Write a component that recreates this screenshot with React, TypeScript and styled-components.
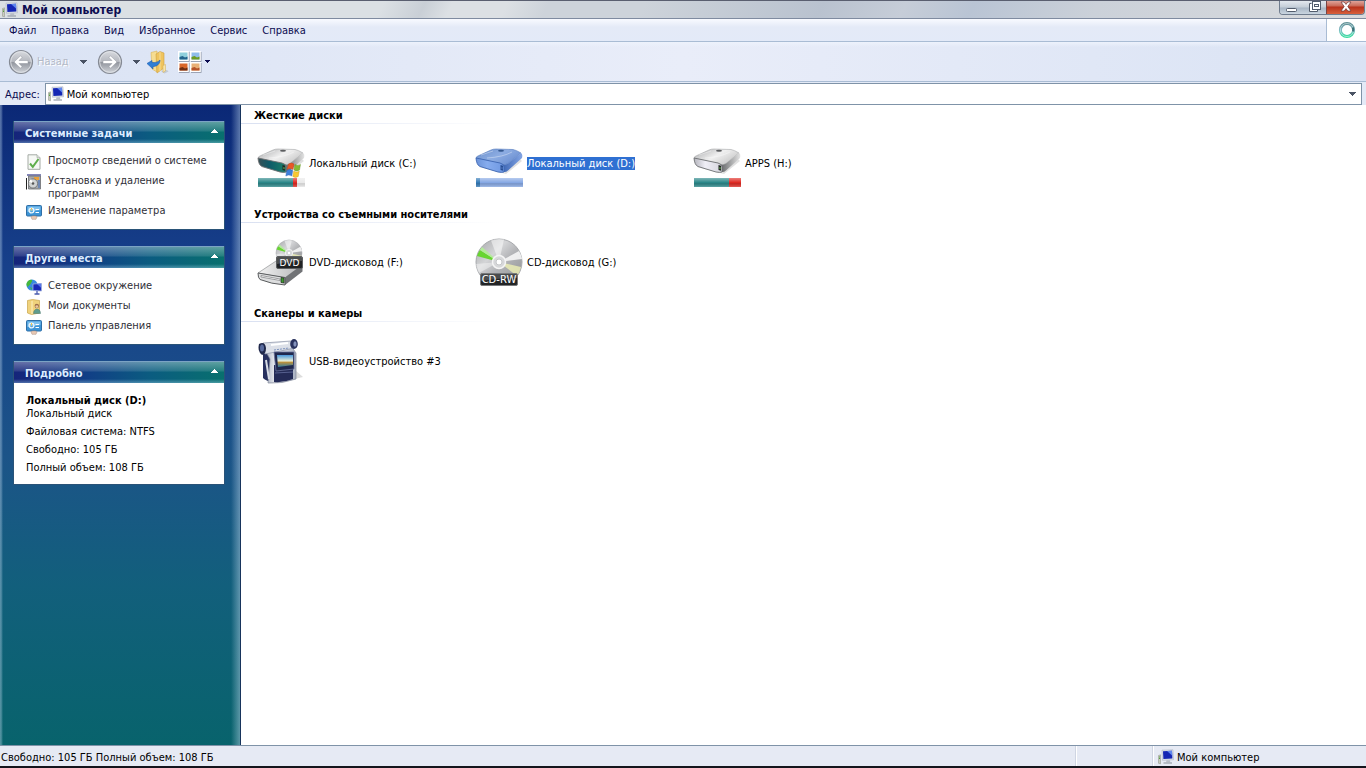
import React from "react";
import styled, { createGlobalStyle, css } from "styled-components";

const GlobalStyle = createGlobalStyle`
  * { box-sizing: border-box; }
  body {
    margin: 0;
    background: #fff;
    color: #000;
    font: 11px/13px Tahoma, "DejaVu Sans Condensed", "DejaVu Sans", sans-serif;
  }
  button, input { font: inherit; color: inherit; }
  svg { display: block; flex: none; }
`;

const Window = styled.div`
  display: flex;
  flex-direction: column;
  min-height: 100vh;
  background: #e4eaf6;
`;

const TitleBar = styled.header`
  display: flex;
  align-items: center;
  height: 19px;
  padding-left: 2px;
  gap: 4px;
  border-top: 1px solid #5a5f70;
  border-bottom: 1px solid #7f8ba0;
  background: linear-gradient(115deg, #dbe0e4 0 28%, #c9cfd6 31%, #dce0e4 33% 37%, #cdd3da 40% 47%, #b9c2cf 60%, #c6cdd8 66%, #b9c4d4 71%, #cbd1d9 80%, #d8dadd 100%);
`;

const Title = styled.h1`
  flex: 1;
  margin: 0;
  color: #0c0c50;
  font: bold 12px/16px Tahoma, "DejaVu Sans Condensed", "DejaVu Sans", sans-serif;
`;

const WindowButtons = styled.div`
  display: flex;
  align-self: flex-start;
  height: 14px;
  margin-right: 1px;
  border: 1px solid #6f7c8e;
  border-top: 0;
  border-radius: 0 0 4px 4px;
  overflow: hidden;
`;

const WindowButton = styled.button<{ $close?: boolean }>`
  display: flex;
  justify-content: center;
  width: ${(p) => (p.$close ? 38 : 23)}px;
  padding: 0;
  border: 0;
  background: ${(p) =>
    p.$close
      ? "linear-gradient(#dfa399 0, #c96a58 5px, #b8321c 6px, #d8603c 13px)"
      : "linear-gradient(#e3e8ee 0, #c5ced8 6px, #a9b6c5 7px, #cad5e0 13px)"};
  ${(p) => p.$close && css`border-left: 1px solid #7a4444;`}
`;

const MenuBar = styled.nav`
  display: flex;
  height: 23px;
  border-bottom: 1px solid #a9bcd4;
  background: linear-gradient(#f8faff, #e4eaf7 8px, #e3eaf8);
`;

const MenuList = styled.ul`
  display: flex;
  flex: 1;
  align-items: center;
  gap: 15px;
  margin: 0;
  padding: 0 0 0 9px;
  list-style: none;
`;

const MenuItem = styled.button`
  padding: 0;
  border: 0;
  background: none;
  color: #0c0c50;
`;

const Throbber = styled.div`
  display: flex;
  align-items: center;
  justify-content: center;
  width: 40px;
  border-left: 1px solid #a9bcd4;
  background: #fff;
`;

const Toolbar = styled.div`
  display: flex;
  align-items: center;
  height: 40px;
  padding-left: 8px;
  border-bottom: 1px solid #a9bcd4;
  background: linear-gradient(#edf2fc, transparent 5px), linear-gradient(90deg, #dae3f4, #e9edf9 50%, #dae3f4);
`;

const ToolButton = styled.button<{ $gap: number }>`
  display: flex;
  align-items: center;
  gap: 3px;
  margin-right: ${(p) => p.$gap}px;
  padding: 0;
  border: 0;
  background: none;
  color: #b4b9c6;
  text-shadow: 1px 1px #fff;
`;

const AddressBar = styled.form`
  display: flex;
  align-items: center;
  height: 23px;
  padding: 1px 4px 0 5px;
  gap: 5px;
  background: #e4eaf7;
  color: #0c0c50;
`;

const AddressBox = styled.div`
  display: flex;
  flex: 1;
  align-items: center;
  height: 22px;
  padding: 0 2px;
  gap: 3px;
  border: 1px solid #7f93a8;
  background: #fff;
  color: #000;
`;

const AddressInput = styled.input`
  flex: 1;
  padding: 0;
  border: 0;
  outline: 0;
  background: transparent;
`;

const DropButton = styled.button`
  padding: 0 3px;
  border: 0;
  background: none;
`;

const Body = styled.div`
  display: flex;
  flex: 1;
`;

const Sidebar = styled.aside`
  width: 241px;
  flex: none;
  padding: 16px 15px 16px 13px;
  border-right: 1px solid #17345c;
  background:
    linear-gradient(90deg, rgba(190, 215, 235, 0.4) 0 1px, transparent 3px calc(100% - 9px), rgba(190, 215, 235, 0.45)),
    linear-gradient(#0b2876, #17408a 25%, #1c5488 55%, #125f7c 75%, #08636c);
`;

const Panel = styled.section`
  margin-bottom: 16px;
  border: 1px solid #2a5378;
  border-top: 0;
  background: #fff;
`;

const PanelHeader = styled.h2`
  display: flex;
  align-items: center;
  justify-content: space-between;
  height: 22px;
  margin: 0;
  padding: 1px 6px 0 11px;
  border-top: 1px solid #7ba3c4;
  background:
    linear-gradient(rgba(255, 255, 255, 0.35), rgba(255, 255, 255, 0.12) 9px, transparent 10px 17px, rgba(170, 220, 240, 0.4)),
    linear-gradient(90deg, #15247a, #113f86 35%, #0b5c80 65%, #08706e);
  color: #dcecff;
  font: bold 11px/13px Tahoma, "DejaVu Sans Condensed", "DejaVu Sans", sans-serif;
`;

const CollapseButton = styled.button`
  padding: 0 0 4px;
  border: 0;
  background: none;
`;

const TaskList = styled.ul`
  display: grid;
  gap: 4px;
  margin: 0;
  padding: 11px 8px 9px 12px;
  list-style: none;
`;

const TaskLink = styled.a`
  display: flex;
  gap: 6px;
  color: #303038;
  text-decoration: none;
`;

const Details = styled.div`
  padding: 11px 12px 10px;
  p { margin: 0 0 5px; }
  p:last-child { margin: 0; }
  strong { display: block; }
`;

const Content = styled.main`
  flex: 1;
  min-width: 0;
  background: #fff;
`;

const GroupTitle = styled.h2`
  height: 19px;
  margin: 0;
  padding: 4px 0 0 13px;
  border-bottom: 1px solid;
  border-image: linear-gradient(90deg, #d9e0f1, #fff 260px) 1;
  font: bold 11px/13px Tahoma, "DejaVu Sans Condensed", "DejaVu Sans", sans-serif;
`;

const Tiles = styled.div`
  display: flex;
  flex-wrap: wrap;
  padding: 15px 16px 17px;
`;

const Tile = styled.button`
  display: flex;
  align-items: center;
  width: 218px;
  padding: 0;
  gap: 4px;
  border: 0;
  background: none;
  text-align: left;
  white-space: nowrap;
`;

const TileLabel = styled.span<{ $selected?: boolean }>`
  ${(p) => p.$selected && css`background: #2f70d2; color: #fff;`}
`;

const StatusBar = styled.footer`
  display: flex;
  height: 23px;
  border-top: 1px solid #7f93a8;
  border-bottom: 2px solid #14141c;
  background: #e6eaf4;
`;

const StatusCell = styled.div<{ $width?: number }>`
  display: flex;
  align-items: center;
  gap: 3px;
  padding: 2px 0 0 1px;
  ${(p) =>
    p.$width
      ? css`width: ${p.$width}px; padding-left: 5px; border-left: 1px solid #cfd5e2; box-shadow: inset 1px 0 #fff;`
      : css`flex: 1;`}
`;

const Arrow = ({ color = "#4a5364", up = false }: { color?: string; up?: boolean }) => (
  <svg width="7" height="4" viewBox="0 0 7 4" shapeRendering="crispEdges" aria-hidden="true">
    <path d={up ? "M0 4L3.5 0L7 4Z" : "M0 0H7L3.5 4Z"} fill={color} />
  </svg>
);

const SmallArrow = () => (
  <svg width="5" height="3" viewBox="0 0 5 3" shapeRendering="crispEdges" aria-hidden="true">
    <path d="M0 0H5L2.5 3Z" fill="#0c0c50" />
  </svg>
);

const ComputerIcon = () => (
  <svg width="16" height="16" viewBox="0 0 16 16" aria-hidden="true">
    <path d="M.5 6.500l2-.7v9l-2-.5z" fill="#c9ccbf" stroke="#8a8e84" strokeWidth=".5" />
    <path d="M1 8h1M1 9.500h1" stroke="#57a040" />
    <path d="M4 1.200l11-.4.5 10-11 .5z" fill="#dfe3ea" stroke="#a2abba" strokeWidth=".5" />
    <path d="M5 2.200l9-.4.4 7.800-9 .4z" fill="#1526b4" />
    <path d="M9 2l5-.2.3 5z" fill="#5f86ee" />
    <path d="M8.500 11.200h3.500l.3 2H8z" fill="#b9bec8" />
    <path d="M5.500 14h8.500" stroke="#989ea8" strokeWidth="1.200" />
  </svg>
);

const NavIcon = ({ forward = false }: { forward?: boolean }) => (
  <svg width="26" height="26" viewBox="0 0 26 26" aria-hidden="true">
    <defs>
      <linearGradient id="nav" x2="0" y2="1">
        <stop stopColor="#d9dbe0" /><stop offset=".48" stopColor="#b5b8bf" />
        <stop offset=".52" stopColor="#92969e" /><stop offset="1" stopColor="#d3d6db" />
      </linearGradient>
    </defs>
    <circle cx="13" cy="13" r="11.500" fill="url(#nav)" stroke="#858a94" strokeWidth="1.200" />
    <circle cx="13" cy="13" r="10.300" fill="none" stroke="#e2e4e8" strokeWidth=".8" />
    <path
      d="M6 13L12.500 6.800L14 8.500L11 11.500H20V14.500H11L14 17.500L12.500 19.200Z"
      fill="#fff" stroke="#92969e" strokeWidth=".5"
      transform={forward ? "translate(26 0) scale(-1 1)" : undefined}
    />
  </svg>
);

const UpFolderIcon = () => (
  <svg width="24" height="24" viewBox="0 0 24 24" aria-hidden="true">
    <path d="M15 21l6-1 1.500 1.500-4 2z" fill="#c3cad4" />
    <path d="M5 2.500L11 1v21l-5-3z" fill="#f6dd92" stroke="#d9b35a" strokeWidth=".6" />
    <path d="M10 4l4-2.500 4 1.500v15l-7 5z" fill="#efc45e" stroke="#cf9f3d" strokeWidth=".6" />
    <path d="M14 2v19" stroke="#f8dc94" />
    <path d="M17 15.500l2.500-1V21l-2.500 1.500z" fill="#f8e5a8" stroke="#cfaa58" strokeWidth=".5" />
    <path d="M1 13.500L6 10.500V12.500c4 .3 6-.5 8-2.500 0 4-3 6.500-7 6.500V19z" fill="#2f7fd6" stroke="#1c5cae" strokeWidth=".6" />
  </svg>
);

const ViewsIcon = () => (
  <svg width="24" height="22" viewBox="0 0 24 22" aria-hidden="true">
    {[[0, 0, "#8fd0dc", "#23648c"], [12, 0, "#8fbdea", "#6c9c22"], [0, 11, "#d9672a", "#702f12"], [12, 11, "#e9b077", "#b5532a"]].map(
      ([x, y, a, b], i) => (
        <g key={i} transform={`translate(${x} ${y})`}>
          <rect x="1" y="1" width="10.500" height="9.800" fill="#8d95a5" />
          <rect width="10.800" height="10" fill="#fff" />
          <rect x="1.500" y="1.500" width="8" height="7" fill={a as string} />
          <path d="M1.500 8.500V6l3-1L7 6.500l2.500-1v3z" fill={b as string} />
        </g>
      )
    )}
  </svg>
);

const ThrobberIcon = () => (
  <svg width="18" height="18" viewBox="0 0 18 18" aria-hidden="true">
    <defs>
      <linearGradient id="ring" x2="0" y2="1">
        <stop stopColor="#5d8f94" /><stop offset=".5" stopColor="#7fb9c4" /><stop offset="1" stopColor="#37dca0" />
      </linearGradient>
    </defs>
    <circle cx="9" cy="9" r="6.600" fill="none" stroke="url(#ring)" strokeWidth="3" />
    <circle cx="9" cy="9" r="6.600" fill="none" stroke="#fff" strokeOpacity=".45" strokeWidth="1" />
    <path d="M14.800 6.500a6 6 0 01.3 4" fill="none" stroke="#3e7076" strokeWidth="2.200" />
  </svg>
);

const CheckPageIcon = () => (
  <svg width="16" height="16" viewBox="0 0 16 16" aria-hidden="true">
    <path d="M2 .8h9l3 3v11.500H2z" fill="#f6f8f5" stroke="#a4aaa4" />
    <path d="M11 .8v3h3" fill="#dfe3df" stroke="#a4aaa4" strokeWidth=".7" />
    <path d="M4 9.500l2.800 3.300L12.500 5" fill="none" stroke="#5fae4c" strokeWidth="2" />
  </svg>
);

const InstallIcon = () => (
  <svg width="16" height="16" viewBox="0 0 16 16" aria-hidden="true">
    <path d="M1 0h14v2H1z" fill="#8487b8" />
    <path d="M2.500 2h12v13h-12z" fill="#a6a8ab" stroke="#6a6c70" strokeWidth=".8" />
    <path d="M8 3h5v3H8z" fill="#e8a13c" />
    <path d="M12 6h2v8h-2z" fill="#6f88b4" />
    <path d="M.5 4v11.500" fill="none" stroke="#222" />
    <circle cx="7" cy="9.500" r="4.600" fill="#d2d4d5" stroke="#66686b" strokeWidth=".8" />
    <path d="M7 9.500L3 7.500l2-2.500z" fill="#fff" />
    <circle cx="7" cy="9.500" r="1.300" fill="#555" />
  </svg>
);

const ControlPanelIcon = () => (
  <svg width="16" height="16" viewBox="0 0 16 16" aria-hidden="true">
    <rect x=".5" y="1.500" width="15" height="10.500" rx="1" fill="#3d94d6" stroke="#2f6ea6" />
    <path d="M1.500 2.500h13v3.500l-13 2z" fill="#7cc0ee" />
    <circle cx="5.500" cy="6.500" r="2.400" fill="none" stroke="#e9f5fd" strokeWidth="1.300" />
    <path d="M5.500 6.500V4" stroke="#f3c44b" />
    <path d="M9.500 5.500H13M9.500 8.500H13" stroke="#fff" strokeWidth="1.200" />
    <path d="M5 13c0-1.500 6-1.500 6 0l-1 2.300H6z" fill="#e8c9b4" stroke="#a88d80" strokeWidth=".5" />
  </svg>
);

const NetworkIcon = () => (
  <svg width="16" height="16" viewBox="0 0 16 16" aria-hidden="true">
    <circle cx="6" cy="6" r="5.500" fill="#3a8be0" />
    <path d="M2 2c3-2.500 5-1 4 .5S5 5 3 6.500 2 9 1 7 .5 4 2 2zM4 8l2 1-.5 2.500z" fill="#46b83a" />
    <path d="M7 5l8.500-.5v7.500L7 11.500z" fill="#1a2ab8" stroke="#9fb0dc" strokeWidth=".8" />
    <path d="M11 5l4-.2v4z" fill="#5675ea" />
    <path d="M11 12v3M8.500 15h5" stroke="#4a5cae" strokeWidth="1.300" />
  </svg>
);

const DocumentsIcon = () => (
  <svg width="16" height="16" viewBox="0 0 16 16" aria-hidden="true">
    <path d="M1.500 1.500l5-1 7 1V14l-8 1.500-4-1.500z" fill="#f0d27c" stroke="#c9a548" strokeWidth=".7" />
    <path d="M6 2v13" stroke="#fdf1c2" />
    <circle cx="10.800" cy="7" r="2.200" fill="#9b6e48" />
    <circle cx="10.800" cy="7.600" r="1.400" fill="#eac69f" />
    <path d="M7.500 14.500c0-6 7-6 7 0z" fill="#5f9c8e" stroke="#4d7a70" strokeWidth=".5" />
  </svg>
);

type DriveKind = "system" | "selected" | "plain";

const DriveIcon = ({ kind, used, critical = 0 }: { kind: DriveKind; used: number; critical?: number }) => {
  const blue = kind === "selected";
  const id = `drive-${kind}`;
  return (
    <svg width="48" height="48" viewBox="0 0 48 48" aria-hidden="true">
      <defs>
        <linearGradient id={`${id}-top`} x2="1" y2=".6">
          <stop stopColor={blue ? "#6c90cc" : "#a6a7a9"} />
          <stop offset=".55" stopColor={blue ? "#8cace2" : "#f0f0f0"} />
          <stop offset="1" stopColor={blue ? "#6c90d2" : "#c8c8c8"} />
        </linearGradient>
        <linearGradient id={`${id}-side`} x2="1">
          <stop stopColor={blue ? "#3f68b5" : "#66686a"} />
          <stop offset="1" stopColor={blue ? "#83a5e4" : "#e4e4e4"} />
        </linearGradient>
        <linearGradient id={`${id}-face`} x2="1">
          <stop stopColor={blue ? "#6a92d8" : kind === "system" ? "#3a5055" : "#b4b4bc"} />
          <stop offset=".4" stopColor={blue ? "#86acee" : kind === "system" ? "#0f5a68" : "#efeef6"} />
          <stop offset="1" stopColor={blue ? "#6f98e2" : kind === "system" ? "#1a8068" : "#d5d5dc"} />
        </linearGradient>
        <linearGradient id={`${id}-bar`} x2="0" y2="1">
          <stop stopColor="#fff" stopOpacity=".4" />
          <stop offset=".5" stopColor="#fff" stopOpacity="0" />
          <stop offset=".55" stopOpacity=".1" />
          <stop offset="1" stopColor="#fff" stopOpacity=".25" />
        </linearGradient>
      </defs>
      <path d="M4 28L31 35L47 22L44 19L28 29Z" fill="#000" opacity=".12" />
      <path d="M1 19Q1 17.500 4 16.500L16 11Q18 10 21 10L38 10.500Q41 11 46 14L33 24.500Q31 26 27 25.500Z" fill={`url(#${id}-top)`} stroke={blue ? "#5278bc" : "#a5a6a8"} strokeWidth=".6" />
      <path d="M28 25.500Q31 26 33 24.500L46 14Q48 15 47 19L33 31.500Q31 33.500 28.500 33Z" fill={`url(#${id}-side)`} />
      <path d="M1 19L25 24Q29 25 29 28V33Q27 33.800 23 33L5 27.500Q1.500 26 1 19Z" fill={`url(#${id}-face)`} stroke={blue ? "#3d66b2" : "#6c6e71"} strokeWidth=".9" />
      <path d="M6 16L18 12M12 19Q28 18 37 13" stroke="#fff" strokeOpacity=".35" fill="none" />
      <ellipse cx="26" cy="11.800" rx="3" ry="1" fill={blue ? "#34588f" : "#5c5e60"} />
      <path d="M25.500 26l2.500.7v5l-2.500-.6z" fill={blue ? "#284f94" : "#202623"} />
      <path d="M26.500 28l1 .2v2l-1-.2z" fill={blue ? "#5379be" : "#6fbb59"} />
      {kind === "system" && (
        <g strokeWidth=".4">
          <path d="M31.500 25q3-2 5.500 0l-1 5.500q-3-2-6 0z" fill="#ea5725" stroke="#b9421c" />
          <path d="M38 25.500q3 2 5.500 0l-1 5.500q-3 2-5.500 0z" fill="#85bb32" stroke="#5d8e1f" />
          <path d="M29.800 31.500q3-2 6 0l-1 5.500q-3-2-6 0z" fill="#3c7fdc" stroke="#2b5eac" />
          <path d="M36.800 32q3 2 5.500 0l-1 5.500q-3 2-5.500 0z" fill="#f8c830" stroke="#c89a1e" />
        </g>
      )}
      <rect x="1" y="39" width="47" height="9" fill={blue ? "#86a8e4" : "#e9e9e9"} />
      <rect x="1" y="39" width={used} height="9" fill={blue ? "#357bb8" : "#2b8789"} />
      <rect x={1 + used} y="39" width={critical} height="9" fill="#df2a23" />
      <rect x="1" y="39" width="47" height="9" fill={`url(#${id}-bar)`} />
    </svg>
  );
};

const Disc = ({ id, cx, cy, r }: { id: string; cx: number; cy: number; r: number }) => (
  <g transform={`translate(${cx} ${cy}) scale(${r / 23})`}>
    <defs>
      <linearGradient id={id} x2="1" y2="1">
        <stop stopColor="#a2a4a6" /><stop offset=".35" stopColor="#d4d5d7" />
        <stop offset=".55" stopColor="#b4b5b8" /><stop offset="1" stopColor="#8d8f92" />
      </linearGradient>
    </defs>
    <circle r="23" fill={`url(#${id})`} stroke="#a8aaad" />
    <path d="M0 0L-8-21.500A23 23 0 015-22.500Z" fill="#fff" opacity=".5" />
    <path d="M0 0L20-11A23 23 0 0123-3Z" fill="#fff" opacity=".8" />
    <path d="M0 0L-19-12A23 23 0 00-22-6Z" fill="#68d531" />
    <path d="M0 0L-17-15A23 23 0 00-19-12Z" fill="#b4ec9a" />
    <path d="M0 0L22 5A23 23 0 0118 14Z" fill="#eef0b4" opacity=".8" />
    <path d="M0 0L-23 2A23 23 0 00-20 11Z" fill="#fff" opacity=".4" />
    <circle r="6.500" fill="#d7d8da" stroke="#f5f5f5" strokeWidth="1.500" />
    <circle r="3" fill="#fff" stroke="#c5c7c9" />
  </g>
);

const DvdIcon = () => (
  <svg width="48" height="48" viewBox="0 0 48 48" aria-hidden="true">
    <defs>
      <linearGradient id="dvd-top" x2="1"><stop stopColor="#f3f3f3" /><stop offset="1" stopColor="#b4b5b7" /></linearGradient>
    </defs>
    <Disc id="dvd-disc" cx={32} cy={15} r={13} />
    <path d="M1 35L19 23H43Q46 24 45 27L28 40Z" fill="url(#dvd-top)" stroke="#919395" strokeWidth=".7" />
    <path d="M28 39.500L45.500 26.500V33.500L28 47Z" fill="#717376" />
    <path d="M1 35L28 39.500V47Q14 46 3 41.500Q1 40 1 35Z" fill="#dddedf" stroke="#5a5c5e" />
    <path d="M4 37.500L23 41V42.500L4 39Z" fill="#fff" stroke="#88898b" strokeWidth=".8" />
    <path d="M24 39.500l3 .5v5l-3-.5z" fill="#3d9c2e" stroke="#222" strokeWidth=".7" />
    <rect x="19.500" y="18.500" width="26" height="12" rx="1.500" fill="#202224" stroke="#5c5e60" />
    <path d="M20 19h25v4q-12 0-25 3z" fill="#fff" opacity=".2" />
    <text x="32.500" y="28" fill="#fff" fontSize="9" fontFamily="DejaVu Sans, sans-serif" textAnchor="middle">DVD</text>
  </svg>
);

const CdIcon = () => (
  <svg width="48" height="48" viewBox="0 0 48 48" aria-hidden="true">
    <Disc id="cd-disc" cx={24} cy={24} r={23} />
    <rect x="5.500" y="35.500" width="37" height="12" rx="1.500" fill="#222426" stroke="#77797b" />
    <path d="M6 36h36v4q-17 0-36 3z" fill="#fff" opacity=".18" />
    <text x="24" y="45" fill="#fff" fontSize="10" fontFamily="DejaVu Sans, sans-serif" textAnchor="middle">CD-RW</text>
  </svg>
);

const CameraIcon = () => (
  <svg width="48" height="48" viewBox="0 0 48 48" aria-hidden="true">
    <defs>
      <linearGradient id="cam-body" x2="1"><stop stopColor="#aab1c2" /><stop offset=".35" stopColor="#f5f6f8" /><stop offset="1" stopColor="#a7afc0" /></linearGradient>
      <linearGradient id="cam-lcd" x2="0" y2="1"><stop stopColor="#4998dc" /><stop offset=".5" stopColor="#edf1d7" /><stop offset=".6" stopColor="#be9139" /><stop offset="1" stopColor="#2f7ca4" /></linearGradient>
    </defs>
    <path d="M20 46L46 40L38 33Z" fill="#777" opacity=".25" />
    <path d="M6 17L15 13L17 46Q9 44 6 41Z" fill="#27305e" />
    <path d="M9 15L34 9L39 16V42Q25 47 11 46L13 22Z" fill="url(#cam-body)" stroke="#818899" strokeWidth=".7" />
    <path d="M6 6L34 4L37 11Q25 14 8 17Z" fill="#dce0e8" stroke="#8b94a7" strokeWidth=".7" />
    <path d="M14 8L31 6" stroke="#fff" strokeWidth="2" />
    <path d="M17 13L32 11" stroke="#7e93bd" strokeDasharray="2 1" />
    <path d="M2 7Q8 4 9 11Q9 17 5 18Q0 14 2 7Z" fill="#20284b" />
    <ellipse cx="5" cy="11" rx="2" ry="3.500" fill="#596b9e" />
    <ellipse cx="37" cy="7" rx="3.800" ry="5" fill="#29325d" />
    <ellipse cx="38" cy="7" rx="1.600" ry="2.800" fill="#8492bb" />
    <path d="M17 28L36 29V42Q26 46 17 45Z" fill="#242b57" />
    <path d="M18 36L36 35" stroke="#56608f" />
    <path d="M17 15L37 15V32L19 34Z" fill="#20284d" stroke="#66709b" strokeWidth=".8" />
    <path d="M20 18L36 18V28L21 30Z" fill="url(#cam-lcd)" />
    <path d="M9 23L12 42" stroke="#d8dce5" strokeWidth="2" />
  </svg>
);

const menuItems = ["Файл", "Правка", "Вид", "Избранное", "Сервис", "Справка"];

type TaskEntry = { icon: React.ReactNode; label: string };

const systemTasks: TaskEntry[] = [
  { icon: <CheckPageIcon />, label: "Просмотр сведений о системе" },
  { icon: <InstallIcon />, label: "Установка и удаление программ" },
  { icon: <ControlPanelIcon />, label: "Изменение параметра" },
];

const otherPlaces: TaskEntry[] = [
  { icon: <NetworkIcon />, label: "Сетевое окружение" },
  { icon: <DocumentsIcon />, label: "Мои документы" },
  { icon: <ControlPanelIcon />, label: "Панель управления" },
];

const groups = [
  {
    title: "Жесткие диски",
    items: [
      { label: "Локальный диск (C:)", icon: <DriveIcon kind="system" used={35} critical={4} /> },
      { label: "Локальный диск (D:)", icon: <DriveIcon kind="selected" used={4} />, selected: true },
      { label: "APPS (H:)", icon: <DriveIcon kind="plain" used={35} critical={12} /> },
    ],
  },
  {
    title: "Устройства со съемными носителями",
    items: [
      { label: "DVD-дисковод (F:)", icon: <DvdIcon /> },
      { label: "CD-дисковод (G:)", icon: <CdIcon /> },
    ],
  },
  { title: "Сканеры и камеры", items: [{ label: "USB-видеоустройство #3", icon: <CameraIcon /> }] },
] as { title: string; items: { label: string; icon: React.ReactNode; selected?: boolean }[] }[];

const SidePanel = ({ title, children }: { title: string; children: React.ReactNode }) => (
  <Panel>
    <PanelHeader>
      {title}
      <CollapseButton aria-label="Свернуть"><Arrow up color="#fff" /></CollapseButton>
    </PanelHeader>
    {children}
  </Panel>
);

const Tasks = ({ tasks }: { tasks: TaskEntry[] }) => (
  <TaskList>
    {tasks.map((t) => (
      <li key={t.label}><TaskLink href="#">{t.icon}<span>{t.label}</span></TaskLink></li>
    ))}
  </TaskList>
);

export default function App() {
  return (
    <>
      <GlobalStyle />
      <Window>
        <TitleBar>
          <ComputerIcon />
          <Title>Мой компьютер</Title>
          <WindowButtons>
            <WindowButton aria-label="Свернуть окно">
              <svg width="12" height="13" viewBox="0 0 12 13"><rect x=".5" y="7.500" width="10" height="3" rx="1" fill="#fff" stroke="#525c6c" /></svg>
            </WindowButton>
            <WindowButton aria-label="Восстановить">
              <svg width="12" height="13" viewBox="0 0 12 13" fill="#fff" stroke="#525c6c">
                <path d="M2.500 2.500H.5v8h8v-2" /><rect x="3.500" y=".5" width="8" height="8" /><rect x="5.500" y="3.500" width="4" height="2" />
              </svg>
            </WindowButton>
            <WindowButton $close aria-label="Закрыть">
              <svg width="12" height="13" viewBox="0 0 12 13">
                <path d="M1 1h3.200L6 3.400 7.800 1H11L7.800 5.500 11 10H7.800L6 7.600 4.200 10H1l3.200-4.500z" fill="#fff" stroke="#6a3434" strokeWidth=".7" />
              </svg>
            </WindowButton>
          </WindowButtons>
        </TitleBar>
        <MenuBar>
          <MenuList>
            {menuItems.map((m) => <li key={m}><MenuItem>{m}</MenuItem></li>)}
          </MenuList>
          <Throbber><ThrobberIcon /></Throbber>
        </MenuBar>
        <Toolbar>
          <ToolButton $gap={11} disabled><NavIcon />Назад</ToolButton>
          <ToolButton $gap={10} aria-label="История назад"><Arrow /></ToolButton>
          <ToolButton $gap={10} aria-label="Вперед"><NavIcon forward /></ToolButton>
          <ToolButton $gap={6} aria-label="История вперед"><Arrow /></ToolButton>
          <ToolButton $gap={8} aria-label="Вверх"><UpFolderIcon /></ToolButton>
          <ToolButton $gap={0} aria-label="Вид"><ViewsIcon /><SmallArrow /></ToolButton>
        </Toolbar>
        <AddressBar>
          <label htmlFor="address">Адрес:</label>
          <AddressBox>
            <ComputerIcon />
            <AddressInput id="address" defaultValue="Мой компьютер" />
            <DropButton type="button" aria-label="Показать адреса"><Arrow /></DropButton>
          </AddressBox>
        </AddressBar>
        <Body>
          <Sidebar>
            <SidePanel title="Системные задачи"><Tasks tasks={systemTasks} /></SidePanel>
            <SidePanel title="Другие места"><Tasks tasks={otherPlaces} /></SidePanel>
            <SidePanel title="Подробно">
              <Details>
                <strong>Локальный диск (D:)</strong>
                <p>Локальный диск</p>
                <p>Файловая система: NTFS</p>
                <p>Свободно: 105 ГБ</p>
                <p>Полный объем: 108 ГБ</p>
              </Details>
            </SidePanel>
          </Sidebar>
          <Content>
            {groups.map((g) => (
              <section key={g.title}>
                <GroupTitle>{g.title}</GroupTitle>
                <Tiles>
                  {g.items.map((item) => (
                    <Tile key={item.label}>{item.icon}<TileLabel $selected={item.selected}>{item.label}</TileLabel></Tile>
                  ))}
                </Tiles>
              </section>
            ))}
          </Content>
        </Body>
        <StatusBar>
          <StatusCell>Свободно: 105 ГБ Полный объем: 108 ГБ</StatusCell>
          <StatusCell $width={77} />
          <StatusCell $width={214}><ComputerIcon />Мой компьютер</StatusCell>
        </StatusBar>
      </Window>
    </>
  );
}
